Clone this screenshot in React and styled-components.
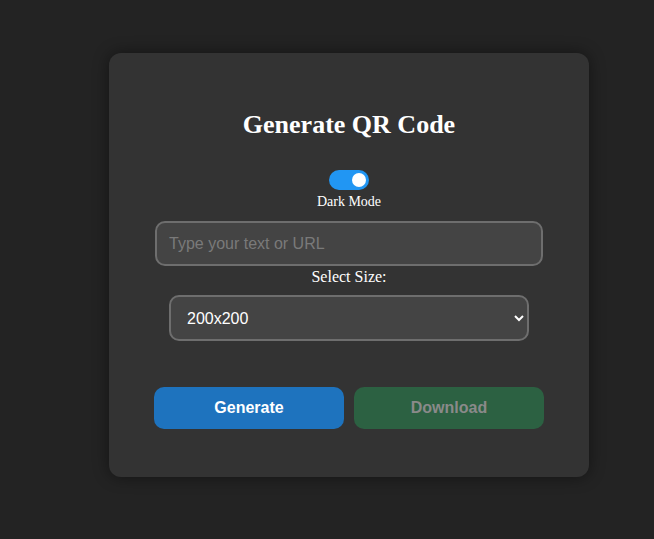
import React, { useState } from 'react';
import styled, { createGlobalStyle } from 'styled-components';

const GlobalStyle = createGlobalStyle`
  html, body {
    margin: 0;
    padding: 0;
    background: #232323;
    color-scheme: dark;
  }
  body {
    font-family: 'Liberation Serif', 'Times New Roman', serif;
    min-height: 539px;
  }
`;

const Page = styled.div`
  padding: 53px 0 0 109px;
`;

const Card = styled.div`
  width: 480px;
  height: 424px;
  box-sizing: border-box;
  padding: 57px 45px 0;
  background: #333333;
  border-radius: 12px;
  box-shadow: 0 0 16px rgba(0, 0, 0, 0.45);
  display: flex;
  flex-direction: column;
  align-items: center;
  color: #fff;
`;

const Title = styled.h2`
  margin: 0;
  font-size: 26px;
  font-weight: bold;
  line-height: 30px;
`;

const ToggleLabel = styled.label`
  margin-top: 30px;
  display: flex;
  flex-direction: column;
  align-items: center;
  gap: 4px;
  font-size: 14px;
  line-height: 16px;
  cursor: pointer;
`;

const Track = styled.span`
  position: relative;
  width: 40px;
  height: 20px;
  border-radius: 10px;
  background: ${p => (p.$on ? '#2196f3' : '#777')};
`;

const Knob = styled.span`
  position: absolute;
  top: 3px;
  left: ${p => (p.$on ? '23px' : '3px')};
  width: 14px;
  height: 14px;
  border-radius: 50%;
  background: #fff;
`;

const TextInput = styled.input`
  margin-top: 11px;
  width: 388px;
  height: 45px;
  box-sizing: border-box;
  padding: 0 12px;
  border: 2px solid #6e6e6e;
  border-radius: 10px;
  background: #444444;
  color: #fff;
  font-family: 'Liberation Sans', Arial, sans-serif;
  font-size: 16px;
  outline: none;
  &::placeholder {
    color: #7a7a7a;
  }
`;

const SizeLabel = styled.div`
  margin-top: 2px;
  font-size: 16px;
  line-height: 18px;
`;

const SizeSelect = styled.select`
  margin-top: 9px;
  width: 360px;
  height: 46px;
  box-sizing: border-box;
  padding: 0 12px;
  border: 2px solid #6e6e6e;
  border-radius: 10px;
  background: #444444;
  color: #fff;
  font-family: 'Liberation Sans', Arial, sans-serif;
  font-size: 16px;
  outline: none;
`;

const ButtonRow = styled.div`
  margin-top: 46px;
  display: flex;
  gap: 10px;
`;

const Button = styled.button`
  width: 190px;
  height: 42px;
  border: none;
  border-radius: 10px;
  background: ${p => p.$bg};
  color: ${p => p.$fg};
  font-family: 'Liberation Sans', Arial, sans-serif;
  font-size: 16px;
  font-weight: bold;
  cursor: pointer;
  &:disabled {
    cursor: default;
  }
`;

export default function App() {
  const [dark, setDark] = useState(true);
  const [text, setText] = useState('');
  const [size, setSize] = useState('200');

  return (
    <>
      <GlobalStyle />
      <Page>
        <Card>
          <Title>Generate QR Code</Title>
          <ToggleLabel onClick={() => setDark(!dark)}>
            <Track $on={dark}>
              <Knob $on={dark} />
            </Track>
            Dark Mode
          </ToggleLabel>
          <TextInput
            placeholder="Type your text or URL"
            value={text}
            onChange={e => setText(e.target.value)}
          />
          <SizeLabel>Select Size:</SizeLabel>
          <SizeSelect value={size} onChange={e => setSize(e.target.value)}>
            <option value="100">100x100</option>
            <option value="200">200x200</option>
            <option value="300">300x300</option>
            <option value="400">400x400</option>
          </SizeSelect>
          <ButtonRow>
            <Button $bg="#1e73be" $fg="#fff">Generate</Button>
            <Button $bg="#2c6142" $fg="#8a8a8a" disabled>Download</Button>
          </ButtonRow>
        </Card>
      </Page>
    </>
  );
}
